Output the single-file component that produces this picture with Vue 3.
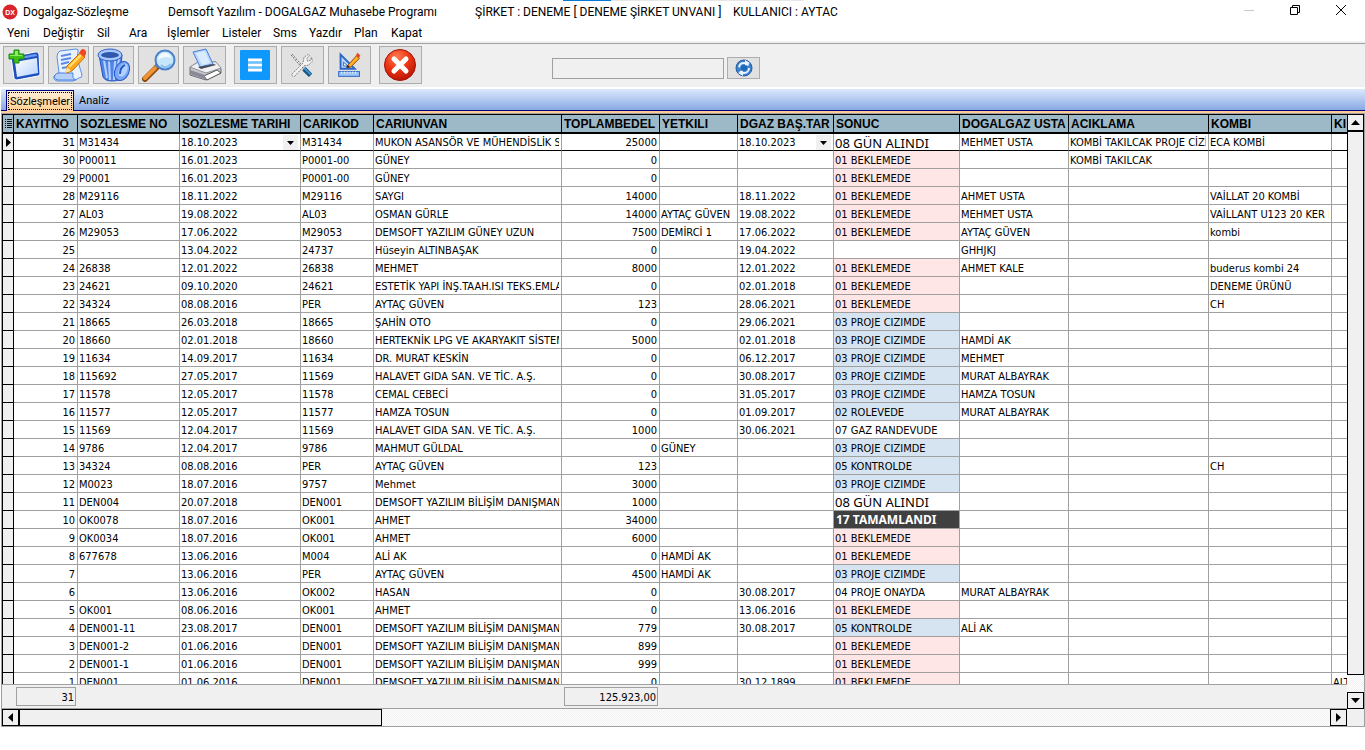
<script setup>
import { ref } from 'vue'

const menu = ['Yeni', 'Değiştir', 'Sil', 'Ara', 'İşlemler', 'Listeler', 'Sms', 'Yazdır', 'Plan', 'Kapat']
const search = ref('')

const columns = [
  { title: 'KAYITNO', cls: 'c-id', num: true },
  { title: 'SOZLESME NO', cls: 'c-no' },
  { title: 'SOZLESME TARIHI', cls: 'c-date', combo: true },
  { title: 'CARIKOD', cls: 'c-code' },
  { title: 'CARIUNVAN', cls: 'c-name' },
  { title: 'TOPLAMBEDEL', cls: 'c-total', num: true },
  { title: 'YETKILI', cls: 'c-auth' },
  { title: 'DGAZ BAŞ.TAR', cls: 'c-start', combo: true },
  { title: 'SONUC', cls: 'c-result', status: true },
  { title: 'DOGALGAZ USTA', cls: 'c-master' },
  { title: 'ACIKLAMA', cls: 'c-note' },
  { title: 'KOMBI', cls: 'c-kombi' },
  { title: 'KI', cls: 'c-last' },
]

const B = '01 BEKLEMEDE'
const P = '03 PROJE CIZIMDE'
const DEM = 'DEMSOFT YAZILIM BİLİŞİM DANIŞMANLIK'
const rows = [
  ['31', 'M31434', '18.10.2023', 'M31434', 'MUKON ASANSÖR VE MÜHENDİSLİK SANAYİ', '25000', '', '18.10.2023', '08 GÜN ALINDI', 'MEHMET USTA', 'KOMBİ TAKILCAK PROJE CİZİLECEK', 'ECA KOMBİ', ''],
  ['30', 'P00011', '16.01.2023', 'P0001-00', 'GÜNEY', '0', '', '', B, '', 'KOMBİ TAKILCAK', '', ''],
  ['29', 'P0001', '16.01.2023', 'P0001-00', 'GÜNEY', '0', '', '', B, '', '', '', ''],
  ['28', 'M29116', '18.11.2022', 'M29116', 'SAYGI', '14000', '', '18.11.2022', B, 'AHMET USTA', '', 'VAİLLAT 20 KOMBİ', ''],
  ['27', 'AL03', '19.08.2022', 'AL03', 'OSMAN GÜRLE', '14000', 'AYTAÇ GÜVEN', '19.08.2022', B, 'MEHMET USTA', '', 'VAİLLANT U123 20 KER KOMBİ', ''],
  ['26', 'M29053', '17.06.2022', 'M29053', 'DEMSOFT YAZILIM GÜNEY UZUN', '7500', 'DEMİRCİ 1', '17.06.2022', B, 'AYTAÇ GÜVEN', '', 'kombi', ''],
  ['25', '', '13.04.2022', '24737', 'Hüseyin ALTINBAŞAK', '0', '', '19.04.2022', '', 'GHHJKJ', '', '', ''],
  ['24', '26838', '12.01.2022', '26838', 'MEHMET', '8000', '', '12.01.2022', B, 'AHMET KALE', '', 'buderus kombi 24', ''],
  ['23', '24621', '09.10.2020', '24621', 'ESTETİK YAPI İNŞ.TAAH.ISI TEKS.EMLAK', '0', '', '02.01.2018', B, '', '', 'DENEME ÜRÜNÜ', ''],
  ['22', '34324', '08.08.2016', 'PER', 'AYTAÇ GÜVEN', '123', '', '28.06.2021', B, '', '', 'CH', ''],
  ['21', '18665', '26.03.2018', '18665', 'ŞAHİN OTO', '0', '', '29.06.2021', P, '', '', '', ''],
  ['20', '18660', '02.01.2018', '18660', 'HERTEKNİK LPG VE AKARYAKIT SİSTEMLERİ', '5000', '', '02.01.2018', P, 'HAMDİ AK', '', '', ''],
  ['19', '11634', '14.09.2017', '11634', 'DR. MURAT KESKİN', '0', '', '06.12.2017', P, 'MEHMET', '', '', ''],
  ['18', '115692', '27.05.2017', '11569', 'HALAVET GIDA SAN. VE TİC. A.Ş.', '0', '', '30.08.2017', P, 'MURAT ALBAYRAK', '', '', ''],
  ['17', '11578', '12.05.2017', '11578', 'CEMAL CEBECİ', '0', '', '31.05.2017', P, 'HAMZA TOSUN', '', '', ''],
  ['16', '11577', '12.05.2017', '11577', 'HAMZA TOSUN', '0', '', '01.09.2017', '02 ROLEVEDE', 'MURAT ALBAYRAK', '', '', ''],
  ['15', '11569', '12.04.2017', '11569', 'HALAVET GIDA SAN. VE TİC. A.Ş.', '1000', '', '30.06.2021', '07 GAZ RANDEVUDE', '', '', '', ''],
  ['14', '9786', '12.04.2017', '9786', 'MAHMUT GÜLDAL', '0', 'GÜNEY', '', P, '', '', '', ''],
  ['13', '34324', '08.08.2016', 'PER', 'AYTAÇ GÜVEN', '123', '', '', '05 KONTROLDE', '', '', 'CH', ''],
  ['12', 'M0023', '18.07.2016', '9757', 'Mehmet', '3000', '', '', P, '', '', '', ''],
  ['11', 'DEN004', '20.07.2018', 'DEN001', DEM, '1000', '', '', '08 GÜN ALINDI', '', '', '', ''],
  ['10', 'OK0078', '18.07.2016', 'OK001', 'AHMET', '34000', '', '', '17 TAMAMLANDI', '', '', '', ''],
  ['9', 'OK0034', '18.07.2016', 'OK001', 'AHMET', '6000', '', '', B, '', '', '', ''],
  ['8', '677678', '13.06.2016', 'M004', 'ALİ AK', '0', 'HAMDİ AK', '', B, '', '', '', ''],
  ['7', '', '13.06.2016', 'PER', 'AYTAÇ GÜVEN', '4500', 'HAMDİ AK', '', P, '', '', '', ''],
  ['6', '', '13.06.2016', 'OK002', 'HASAN', '0', '', '30.08.2017', '04 PROJE ONAYDA', 'MURAT ALBAYRAK', '', '', ''],
  ['5', 'OK001', '08.06.2016', 'OK001', 'AHMET', '0', '', '13.06.2016', B, '', '', '', ''],
  ['4', 'DEN001-11', '23.08.2017', 'DEN001', DEM, '779', '', '30.08.2017', '05 KONTROLDE', 'ALİ AK', '', '', ''],
  ['3', 'DEN001-2', '01.06.2016', 'DEN001', DEM, '899', '', '', B, '', '', '', ''],
  ['2', 'DEN001-1', '01.06.2016', 'DEN001', DEM, '999', '', '', B, '', '', '', ''],
  ['1', 'DEN001', '01.06.2016', 'DEN001', DEM, '0', '', '30.12.1899', B, '', '', '', 'ALTIN'],
]

const statusClass = {
  '01': 'st-wait',
  '02': 'st-work',
  '03': 'st-work',
  '05': 'st-work',
  '08': 'st-day',
  '17': 'st-done',
}
</script>

<template>
  <div class="window">
    <header class="titlebar">
      <div class="progress"></div>
      <svg class="app-icon" viewBox="0 0 16 16">
        <circle cx="8" cy="8" r="7.5" fill="#d8242c" />
        <text x="8" y="10.5" text-anchor="middle" font-size="7" font-weight="bold" fill="#fff">DX</text>
      </svg>
      <div class="titles">
        <span>Dogalgaz-Sözleşme</span>
        <span>Demsoft Yazılım - DOGALGAZ Muhasebe Programı</span>
        <span>ŞİRKET : DENEME [ DENEME ŞİRKET UNVANI ]</span>
        <span>KULLANICI : AYTAC</span>
      </div>
      <div class="win-buttons">
        <button aria-label="Simge durumuna küçült"><svg viewBox="0 0 12 12"><path d="M1 6.5h10" stroke="#c8c8c8" /></svg></button>
        <button aria-label="Önceki boyut"><svg viewBox="0 0 12 12" fill="none" stroke="#000"><path d="M1.5 3.5h7v7h-7zM3.500 3.500v-2h7v7h-2" /></svg></button>
        <button aria-label="Kapat"><svg viewBox="0 0 12 12"><path d="M1 1l10 10M11 1L1 11" stroke="#000" /></svg></button>
      </div>
    </header>

    <nav class="menu">
      <button v-for="m in menu" :key="m">{{ m }}</button>
    </nav>

    <div class="toolbar">
      <button class="tool" aria-label="Yeni">
        <svg viewBox="0 0 34 34">
          <defs><linearGradient id="gw" x1="0" y1="0" x2="1" y2="1"><stop offset="0" stop-color="#fff" /><stop offset="1" stop-color="#b4d3fb" /></linearGradient></defs>
          <path d="M4 9L28 4q3-1 4 2l1 20q0 2-2 2L10 32q-3 0-3-2z" fill="#1f4fc0" stroke="#fff" />
          <path d="M8 10L28 6q2 0 2 2L8 12z" fill="#6d9bf0" />
          <path d="M8 14L30 10l1 15L10 29z" fill="url(#gw)" />
          <path d="M7 2h5v4h5v5h-5v4H7v-4H2V6h5z" fill="#41c01c" stroke="#188a0c" />
          <path d="M8 3h3v4h4v1H3V7h5z" fill="#8eea60" />
        </svg>
      </button>
      <button class="tool" aria-label="Değiştir">
        <svg viewBox="0 0 34 34">
          <path d="M8 3L24 1q3 0 2 3l-1 6 5 17q0 3-3 3l-6 3H5q-4-1-3-5l5-3L5 9q0-5 3-6z" fill="#e8f2ff" stroke="#5c8ee8" />
          <path d="M7 25h14q-1 6 3 7H6q-5-1-3-5 1-2 4-2z" fill="#b5d1fa" stroke="#4d80df" />
          <path d="M9 8l10-2M9 12l10-2M9 16l8-2M10 20l6-1" stroke="#5c89e8" stroke-width="2" />
          <path d="M15 18L28 5l5 4-13 14-6 2z" fill="#ffa819" stroke="#bd7010" />
          <path d="M17 19L29 7" stroke="#ffe07b" stroke-width="2" />
          <path d="M27 5l2-3q2-2 4 0t1 4l-2 3z" fill="#f3481f" />
          <path d="M15 19l-2 6 6-2z" fill="#ffe1b0" />
        </svg>
      </button>
      <button class="tool" aria-label="Sil">
        <svg viewBox="0 0 34 34">
          <path d="M2 7l4 22q2 4 9 4t8-3L25 7z" fill="#5184e8" stroke="#2858b8" />
          <path d="M7 12l3 18M12 13l1 19M18 13l-1 19M22 11l-3 19" stroke="#b6d2ff" stroke-width="2" />
          <ellipse cx="13" cy="7" rx="12" ry="6" fill="#a7c8fa" stroke="#2e60c8" />
          <ellipse cx="13" cy="7" rx="9" ry="3" fill="#3059ad" />
          <ellipse cx="25" cy="23" rx="7" ry="10" transform="rotate(25 25 23)" fill="#78a6f5" stroke="#2b5bc4" />
          <ellipse cx="26" cy="22" rx="4" ry="7" transform="rotate(25 26 22)" fill="#b4d2ff" />
          <path d="M28 17q-5 2-5 9" fill="none" stroke="#245cc8" stroke-width="2" />
        </svg>
      </button>
      <button class="tool" aria-label="Ara">
        <svg viewBox="0 0 34 34">
          <path d="M3 31L16 18" stroke="#8b4a12" stroke-width="6" stroke-linecap="round" />
          <path d="M3 30L13 20" stroke="#ee9435" stroke-width="4" stroke-linecap="round" />
          <path d="M14 19l3-3" stroke="#727c91" stroke-width="4" />
          <circle cx="23" cy="12" r="9.500" fill="#c6e6fc" stroke="#4c7fc9" stroke-width="2" />
          <path d="M16 12q1-8 8-7 5 1 5 5-7-3-13 2z" fill="#f3fbff" />
          <path d="M29 16q-5 6-10 1" fill="none" stroke="#8bc2ed" stroke-width="2" />
        </svg>
      </button>
      <button class="tool tool-wide" aria-label="Yazdır">
        <svg viewBox="0 0 34 34">
          <path d="M2 19L12 13l16 1 5 7v4l-15 7L2 27z" fill="#c4c6cc" stroke="#686b76" />
          <path d="M2 19L12 13l16 1 5 6-15 5z" fill="#f1f1f4" stroke="#93959d" />
          <path d="M5 4L18 1l7 15-13 3z" fill="#b4d5ff" stroke="#4c7edc" />
          <path d="M8 5l9-2 5 12-8 2z" fill="#d9ebff" />
          <path d="M10 19l16-3 2 1-15 4z" fill="#454a57" />
          <path d="M16 28l13-6 4 3-14 7z" fill="#fff" stroke="#555" />
          <path d="M2 22l15 5v4L2 26z" fill="#888b96" />
        </svg>
      </button>
      <button class="tool tool-wide tool-gap" aria-label="Listele">
        <svg viewBox="0 0 34 34">
          <rect x="1" y="2" width="30" height="30" rx="1" fill="#0f98fb" />
          <path d="M9 12h14M9 17h14M9 22h14" stroke="#fff" stroke-width="3" />
          <path d="M9 14.500h14M9 19.500h14" stroke="#72c2fb" />
        </svg>
      </button>
      <button class="tool tool-wide" aria-label="Ayarlar">
        <svg viewBox="0 -2 36 36">
          <path d="M6 5L18 19" stroke="#444" stroke-width="2" stroke-dasharray="2 1" />
          <path d="M6 5L18 19" stroke="#fff" />
          <path d="M19 20l7 7" stroke="#17537f" stroke-width="5" />
          <path d="M19 19l7 7" stroke="#4098d4" stroke-width="2" />
          <path d="M6 26L18 14l1-6 4-3 2 1-3 3 1 3 3-1 1-3 1 4-4 4-5 1L9 28q-3 0-3-2z" fill="#f4f4f4" stroke="#777" stroke-dasharray="2 1" />
        </svg>
      </button>
      <button class="tool tool-wide" aria-label="Çizim">
        <svg viewBox="-1 0 36 36">
          <path d="M7 7v15h15z" fill="#b8d6ff" stroke="#2d67c6" stroke-width="2" />
          <path d="M10 15v4h5z" fill="#fff" stroke="#2d67c6" />
          <path d="M15 18L24 8l3 3-9 9-4 1z" fill="#ffae27" stroke="#8d480b" />
          <path d="M23 8l2-3 3 3-2 3z" fill="#de4e26" />
          <path d="M14 18l-1 3 4-1z" fill="#222" />
          <rect x="5" y="25" width="22" height="5" fill="#9cc4fa" stroke="#275fc2" />
          <path d="M8 25v2M11 25v2M14 25v2M17 25v2M20 25v2M23 25v2" stroke="#fff" />
        </svg>
      </button>
      <button class="tool tool-wide tool-gap" aria-label="Kapat">
        <svg viewBox="0 0 34 34">
          <defs><radialGradient id="gr" cx=".4" cy=".25" r=".8"><stop offset="0" stop-color="#ff7a52" /><stop offset=".5" stop-color="#ee3513" /><stop offset="1" stop-color="#b41204" /></radialGradient></defs>
          <circle cx="16" cy="17" r="15.500" fill="url(#gr)" stroke="#a51206" />
          <path d="M10 11l12 12M22 11L10 23" stroke="#fff" stroke-width="5" stroke-linecap="round" />
        </svg>
      </button>
      <input v-model="search" class="search" type="text" aria-label="Arama" />
      <button class="refresh" aria-label="Yenile">
        <svg viewBox="0 0 18 18">
          <circle cx="9" cy="9" r="8" fill="#3e82cd" stroke="#225aa3" />
          <circle cx="9" cy="9" r="5" fill="none" stroke="#e8f3ff" stroke-width="2" stroke-dasharray="12 4" />
          <path d="M10 1l5 3-5 3zM8 17l-5-3 5-3z" fill="#e8f3ff" />
          <circle cx="9" cy="9" r="3" fill="#1d69b8" />
        </svg>
      </button>
    </div>

    <div class="tabs">
      <button class="tab active"><span>Sözleşmeler</span></button>
      <button class="tab"><span>Analiz</span></button>
    </div>

    <main class="grid">
      <div class="view">
        <div class="rows">
          <table>
            <colgroup>
              <col class="c-ind" />
              <col v-for="c in columns" :key="c.title" :class="c.cls" />
            </colgroup>
            <thead>
              <tr>
                <th class="ind" aria-label="Sütunlar">
                  <svg class="mark" viewBox="0 0 7 9"><path d="M0 .5h1M2 .5h5M0 2.500h1M2 2.500h5M0 4.500h1M2 4.500h5M0 6.500h1M2 6.500h5M0 8.500h1M2 8.500h5" stroke="#111" /></svg>
                </th>
                <th v-for="c in columns" :key="c.title"><div class="clip">{{ c.title }}</div></th>
              </tr>
            </thead>
            <tbody>
              <tr v-for="(r, i) in rows" :key="r[0]" :class="{ current: i === 0 }">
                <td class="ind">
                  <svg v-if="i === 0" class="mark" viewBox="0 0 7 9"><path d="M1 0v9l5-4.500z" fill="#000" /></svg>
                </td>
                <td v-for="(c, j) in columns" :key="c.title" :class="[c.num && 'num', c.status && statusClass[r[j].slice(0, 2)]]">
                  <div class="clip">
                    <span>{{ r[j] }}</span>
                    <button v-if="i === 0 && c.combo" class="combo" aria-label="Tarih seç">
                      <svg viewBox="0 0 7 4"><path d="M0 0h7L3.500 4z" /></svg>
                    </button>
                  </div>
                </td>
              </tr>
            </tbody>
          </table>
        </div>
        <footer class="summary">
          <output class="count">31</output>
          <output class="sum">125.923,00</output>
        </footer>
      </div>

      <div class="vbar">
        <button aria-label="Yukarı"><svg viewBox="0 0 9 9"><path d="M0 7h9L4.500 2z" /></svg></button>
        <div class="vthumb"></div>
        <div class="track"></div>
        <button aria-label="Aşağı"><svg viewBox="0 0 9 9"><path d="M0 2h9L4.500 7z" /></svg></button>
      </div>

      <div class="hbar">
        <button aria-label="Sola"><svg viewBox="0 0 9 9"><path d="M7 0v9L2 4.500z" /></svg></button>
        <div class="hthumb"></div>
        <div class="track"></div>
        <button aria-label="Sağa"><svg viewBox="0 0 9 9"><path d="M2 0v9l5-4.500z" /></svg></button>
      </div>
      <div class="corner"></div>
    </main>
  </div>
</template>

<style>
body {
  background: #fff;
}
</style>

<style scoped>
.window {
  display: flex;
  flex-direction: column;
  height: 100vh;
  box-sizing: border-box;
  padding-bottom: 23px;
  overflow: hidden;
  color: #000;
  font: 11px/16px "DejaVu Sans Condensed", "Noto Sans", sans-serif;
}
.window *,
.window *::before {
  box-sizing: border-box;
}
button {
  margin: 0;
  padding: 0;
  border: 0;
  border-radius: 0;
  background: none;
  color: inherit;
  font: inherit;
}
svg {
  display: block;
}

.titlebar {
  position: relative;
  flex: none;
  display: flex;
  align-items: center;
  height: 24px;
  padding-left: 2px;
  font: 12px/16px Roboto, sans-serif;
}
.progress {
  position: absolute;
  top: 0;
  left: 563px;
  width: 241px;
  height: 1px;
  background: linear-gradient(90deg, #0078d7 20%, #e6e6e6 20%);
}
.app-icon {
  width: 16px;
  height: 16px;
  margin-right: 5px;
  font-family: "Liberation Sans", sans-serif;
}
.titles {
  flex: 1;
  display: grid;
  grid-template-columns: 145px 307px 258px 1fr;
  white-space: nowrap;
}
.win-buttons {
  display: flex;
  align-self: flex-start;
  padding-right: 1px;
}
.win-buttons button {
  display: grid;
  place-items: center;
  width: 46px;
  height: 20px;
}
.win-buttons svg {
  width: 12px;
  height: 12px;
}

.menu {
  flex: none;
  display: grid;
  grid-template-columns: 36px 54px 32px 38px 55px 51px 36px 45px 37px 40px;
  height: 17px;
  padding-left: 7px;
  font: 12px/18px Roboto, sans-serif;
}
.menu button {
  text-align: left;
  white-space: nowrap;
}

.toolbar {
  flex: none;
  display: flex;
  align-items: center;
  gap: 3px;
  height: 46px;
  padding: 2px 3px 0;
  background: linear-gradient(#f0f0f0 2px, #a0a0a0 2px, #a0a0a0 3px, #f0f0f0 3px);
}
.tool {
  flex: none;
  display: grid;
  place-items: center;
  width: 41px;
  height: 38px;
  border: 1px solid #adadad;
  background: #e1e1e1;
}
.tool + .tool {
  margin-left: 1px;
}
.tool svg {
  width: 34px;
  height: 34px;
}
.tool-wide {
  width: 43px;
}
.tool.tool-gap {
  margin-left: 5px;
}
.search {
  width: 172px;
  height: 21px;
  margin: 6px 0 0 127px;
  border: 1px solid #a0a0a0;
  background: #f0f0f0;
  font: inherit;
}
.refresh {
  display: grid;
  place-items: center;
  width: 33px;
  height: 22px;
  margin-top: 6px;
  border: 1px solid #adadad;
  background: #e1e1e1;
}
.refresh svg {
  width: 18px;
  height: 18px;
}

.tabs {
  flex: none;
  display: flex;
  align-items: flex-end;
  height: 24px;
  margin: 2px 0 0 1px;
  padding: 0 0 0 5px;
  border-bottom: 2px solid #ffcc99;
  background: linear-gradient(#dce9fc, #87a9e3 21px, #000080 21px);
  font-family: Roboto, sans-serif;
}
.tab {
  height: 20px;
  margin-bottom: 1px;
  padding: 1px;
}
.tab span {
  display: block;
  height: 18px;
  padding: 0 4px;
  line-height: 20px;
}
.tab.active {
  height: 21px;
  margin-bottom: 0;
  border: 1px solid #000080;
  border-bottom: 0;
  background: linear-gradient(#ffefd8, #ffcf92);
}
.tab.active span {
  padding: 0 1px;
  border: 1px dotted #000;
  line-height: 18px;
}

.grid {
  flex: 1;
  min-height: 0;
  display: grid;
  grid-template-columns: minmax(0, 1fr) 17px;
  grid-template-rows: minmax(0, 1fr) 18px;
  margin-left: 1px;
  border: 1px solid #a0a0a0;
  background: #f0f0f0;
}
.view {
  display: flex;
  flex-direction: column;
  min-width: 0;
  min-height: 0;
}
.rows {
  flex: 1;
  min-height: 0;
  overflow: hidden;
  border-top: 1px solid #000;
  background: #fff;
}
table {
  table-layout: fixed;
  width: 1410px;
  border-collapse: separate;
  border-spacing: 0;
}
.c-ind { width: 12px; }
.c-id { width: 64px; }
.c-no { width: 102px; }
.c-date { width: 121px; }
.c-code { width: 73px; }
.c-name { width: 188px; }
.c-total { width: 98px; }
.c-auth { width: 78px; }
.c-start { width: 96px; }
.c-result { width: 126px; }
.c-master { width: 109px; }
.c-note { width: 140px; }
.c-kombi { width: 123px; }
.c-last { width: 80px; }
th {
  height: 19px;
  padding: 0 1px 0 2px;
  border-right: 1px solid #000;
  border-bottom: 2px solid #000;
  background: #9db9c8;
  font: bold 12px/16px "Liberation Sans", sans-serif;
  text-align: left;
}
td {
  height: 18px;
  padding: 0 2px 0 1px;
  border-right: 1px solid #a0a0a0;
  border-bottom: 1px solid #a0a0a0;
}
.clip {
  display: flex;
  justify-content: space-between;
  height: 17px;
  overflow: hidden;
  line-height: 19px;
  white-space: nowrap;
}
.num .clip {
  justify-content: flex-end;
}
.ind {
  padding: 0 0 0 2px;
  border-left: 1px solid #000;
  border-right-color: #000;
  border-bottom-color: #000;
}
td.ind {
  background: #f0f0f0;
}
.mark {
  width: 7px;
  height: 9px;
}
.current td {
  height: 17px;
  border-bottom: 1px solid #000;
}
.current .clip {
  height: 16px;
  line-height: 18px;
}
.combo {
  display: grid;
  place-items: center;
  width: 15px;
  height: 15px;
  margin-top: 1px;
  background: #f0f0f0;
}
.combo svg {
  width: 7px;
  height: 4px;
}
.st-wait {
  background: #ffe6e6;
}
.st-work {
  background: #d6e4f2;
}
.st-day {
  font: 13px/17px "Noto Sans", sans-serif;
}
.st-done {
  padding-left: 2px;
  background: #404040;
  color: #fff;
  font: bold 12px/17px "Noto Sans", sans-serif;
}
.st-done .clip {
  line-height: 17px;
}

.summary {
  flex: none;
  display: grid;
  grid-template-columns: 60px 94px;
  column-gap: 488px;
  height: 24px;
  padding: 2px 0 2px 14px;
  border-top: 1px solid #a0a0a0;
  text-align: right;
}
.summary output {
  height: 19px;
  padding-right: 1px;
  border: 1px solid #a0a0a0;
  line-height: 19px;
}

.vbar,
.hbar {
  display: flex;
}
.vbar {
  flex-direction: column;
  margin-bottom: -1px;
}
.vbar button,
.hbar button {
  flex: none;
  display: grid;
  place-items: center;
  width: 17px;
  height: 17px;
  border: 1px solid #000;
  background: #f0f0f0;
}
.vbar button svg,
.hbar button svg {
  width: 9px;
  height: 9px;
}
.vthumb {
  flex: 31;
  border: 1px solid #000;
  background: #f0f0f0;
}
.hbar {
  border-top: 1px solid #a0a0a0;
}
.hthumb {
  flex: 0 0 27%;
  border: 1px solid #000;
  background: #f0f0f0;
}
.track {
  flex: 1;
  background: repeating-conic-gradient(#f0f0f0 0 25%, #fff 0 50%) 0 0 / 2px 2px;
}
</style>
